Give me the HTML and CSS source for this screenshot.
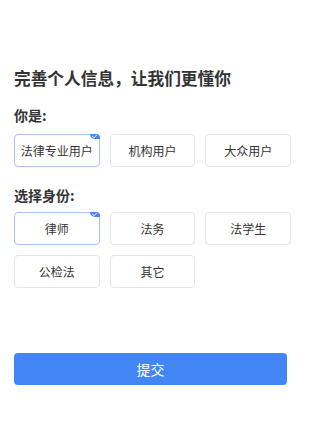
FILE: index.html
```html
<!DOCTYPE html>
<html lang="zh-CN">
<head>
<meta charset="utf-8">
<title>完善个人信息</title>
<link rel="stylesheet" href="styles.css">
</head>
<body>
<div class="page">
  <h1 class="title">完善个人信息，让我们更懂你</h1>
  <div class="label label-first">你是:</div>
  <div class="options options-first">
    <div class="opt selected">法律专业用户<span class="badge"><svg viewBox="0 0 9 5" width="9" height="5"><path d="M2.6 2.4 L4 3.6 L6.6 1.2" fill="none" stroke="#fff" stroke-width="0.9" stroke-linecap="round" stroke-linejoin="round"/></svg></span></div>
    <div class="opt">机构用户</div>
    <div class="opt">大众用户</div>
  </div>
  <div class="label label-second">选择身份:</div>
  <div class="options">
    <div class="opt selected">律师<span class="badge"><svg viewBox="0 0 9 5" width="9" height="5"><path d="M2.6 2.4 L4 3.6 L6.6 1.2" fill="none" stroke="#fff" stroke-width="0.9" stroke-linecap="round" stroke-linejoin="round"/></svg></span></div>
    <div class="opt">法务</div>
    <div class="opt">法学生</div>
    <div class="opt">公检法</div>
    <div class="opt">其它</div>
  </div>
  <button class="submit">提交</button>
</div>
</body>
</html>
```

FILE: styles.css
```css
* { box-sizing: border-box; }
html, body { margin: 0; padding: 0; background: #fff; }
body {
  font-family: "Noto Sans CJK SC", "Noto Sans", "Liberation Sans", sans-serif;
  color: #333;
}
.page {
  padding: 66px 0 0 14px;
}
.title {
  margin: 0;
  font-size: 16.7px;
  line-height: 24px;
  font-weight: bold;
  color: #333;
}
.label {
  font-size: 14px;
  line-height: 20px;
  font-weight: bold;
  color: #333;
}
.label-first { margin-top: 15px; }
.label-second { margin-top: 18px; }
.options {
  display: grid;
  width: 277px;
  grid-template-columns: repeat(3, 1fr);
  column-gap: 10px;
  row-gap: 10px;
  margin-top: 7px;
}
.options-first { margin-top: 9px; }
.opt {
  position: relative;
  height: 33px;
  border: 1px solid #e6e6e6;
  border-radius: 4px;
  display: flex;
  align-items: center;
  justify-content: center;
  font-size: 12px;
  color: #333;
  background: #fff;
}
.opt.selected {
  border-color: #a9c6f2;
}
.badge {
  position: absolute;
  top: -1px;
  right: -1px;
  width: 10px;
  height: 5px;
  background: #4a86e8;
  border-radius: 0 4px 0 5px;
  display: flex;
}
.badge svg { display: block; }
.submit {
  display: block;
  margin-top: 65px;
  width: 273px;
  height: 32px;
  border: none;
  border-radius: 4px;
  background: #4285f4;
  color: #fff;
  font-family: "Noto Sans CJK SC", "Noto Sans", sans-serif;
  font-size: 14px;
  padding: 0;
}
```
